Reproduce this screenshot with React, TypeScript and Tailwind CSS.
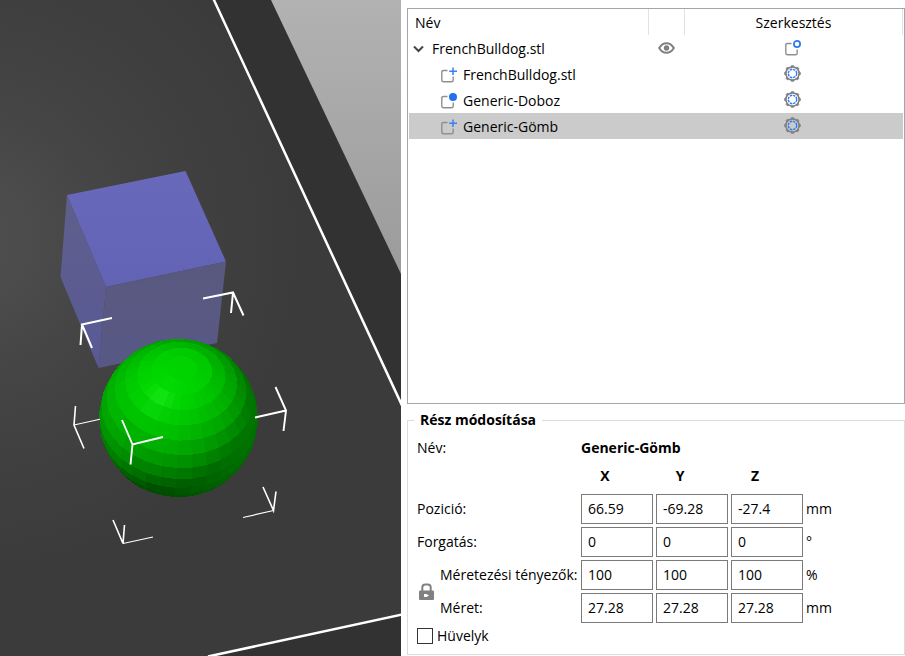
import { useState } from "react";

type Vec3 = [number, number, number];

const dot = (a: Vec3, b: Vec3) => a[0] * b[0] + a[1] * b[1] + a[2] * b[2];
const cross = (a: Vec3, b: Vec3): Vec3 => [
  a[1] * b[2] - a[2] * b[1],
  a[2] * b[0] - a[0] * b[2],
  a[0] * b[1] - a[1] * b[0],
];
const normalize = (a: Vec3): Vec3 => {
  const l = Math.sqrt(dot(a, a));
  return [a[0] / l, a[1] / l, a[2] / l];
};

const STEP = 11.25;
const POLE = normalize([0.045, 0.635, 0.765]);
const SIDE = normalize(cross(POLE, [0.35, -0.6, 0.7]));
const BACK = cross(POLE, SIDE);
const TOP_LIGHT: Vec3 = [-0.4575, 0.4575, 0.7625];
const FRONT_LIGHT: Vec3 = [0.6985, 0.1397, 0.6985];
const HALF = normalize([TOP_LIGHT[0], TOP_LIGHT[1], TOP_LIGHT[2] + 1]);

function onSphere(theta: number, phi: number): Vec3 {
  const t = (theta * Math.PI) / 180;
  const p = (phi * Math.PI) / 180;
  const s = Math.sin(t);
  return [0, 1, 2].map(
    (i) => POLE[i] * Math.cos(t) + s * (SIDE[i] * Math.cos(p) + BACK[i] * Math.sin(p)),
  ) as Vec3;
}

// Flat-shaded facets of the sphere, front side only.
function sphereFacets(cx: number, cy: number, r: number) {
  const out: { points: string; fill: string }[] = [];
  for (let t = 0; t < 180; t += STEP) {
    for (let p = 0; p < 360; p += STEP) {
      const n = onSphere(t + STEP / 2, p + STEP / 2);
      if (n[2] < -0.05) continue;
      const diffuse =
        0.3 + 0.48 * Math.max(dot(n, TOP_LIGHT), 0) + 0.18 * Math.max(dot(n, FRONT_LIGHT), 0);
      const capDiffuse =
        0.3 + 0.48 * Math.max(dot(POLE, TOP_LIGHT), 0) + 0.18 * Math.max(dot(POLE, FRONT_LIGHT), 0);
      const mix = t < STEP ? 0.8 : t < STEP * 2 ? 0.4 : 0;
      const spec = 0.075 * Math.pow(Math.max(dot(n, HALF), 0), 70);
      const g = Math.round(255 * Math.min(1, diffuse * (1 - mix) + capDiffuse * mix + spec * 0.6));
      const rb = Math.round(255 * spec);
      const corners = [
        onSphere(t, p),
        onSphere(t + STEP, p),
        onSphere(t + STEP, p + STEP),
        onSphere(t, p + STEP),
      ];
      out.push({
        points: corners.map((c) => `${(cx + c[0] * r).toFixed(2)},${(cy - c[1] * r).toFixed(2)}`).join(" "),
        fill: `rgb(${rb},${g},${rb})`,
      });
    }
  }
  return out;
}

const FACETS = sphereFacets(178.5, 418, 79.5);

function Viewport() {
  return (
    <svg
      className="block h-full w-full"
      viewBox="0 0 401 656"
      preserveAspectRatio="xMinYMin slice"
      role="img"
      aria-label="3D"
    >
      <defs>
        <linearGradient id="sky" x1="0" y1="0" x2="0" y2="1">
          <stop offset="0" stopColor="#b2b2b2" />
          <stop offset="1" stopColor="#9b9b9b" />
        </linearGradient>
        <radialGradient id="bed" gradientUnits="userSpaceOnUse" cx="-30" cy="240" r="330">
          <stop offset="0" stopColor="#505050" />
          <stop offset="0.5" stopColor="#434343" />
          <stop offset="1" stopColor="#3b3b3b" />
        </radialGradient>
        <linearGradient id="boxTop" x1="0" y1="0" x2="0" y2="1">
          <stop offset="0" stopColor="#6969bc" />
          <stop offset="1" stopColor="#6363b6" />
        </linearGradient>
        <linearGradient id="boxLeft" x1="0" y1="0" x2="0" y2="1">
          <stop offset="0" stopColor="#5f5f8d" />
          <stop offset="1" stopColor="#595996" />
        </linearGradient>
        <linearGradient id="boxFront" x1="0" y1="0" x2="0" y2="1">
          <stop offset="0" stopColor="#59597f" />
          <stop offset="1" stopColor="#585886" />
        </linearGradient>
      </defs>
      <rect width="401" height="656" fill="#323232" />
      <path d="M271 0H401V274Z" fill="url(#sky)" />
      <path d="M0 0H213.500L401 404V615L210 656H0Z" fill="url(#bed)" />
      <path d="M213.500 -1L402 405.500M402 614.500L208 656.500" stroke="#fff" strokeWidth="2.500" fill="none" />
      <path d="M67 195L185.500 171L226 261.500L106 287Z" fill="url(#boxTop)" />
      <path d="M67 195L106 287L98.500 368L60.500 277Z" fill="url(#boxLeft)" />
      <path d="M106 287L226 261.500L217 343L98.500 368Z" fill="url(#boxFront)" />
      <g stroke="#fff" fill="none">
        <path d="M203 298.500L233 292.500L243.500 315.500M233 292.500L231 313M112 318L82 324.500L92 348M82 324.500L80.500 345" strokeWidth="2" />
        <path d="M75.500 406L74 425L84 448.500M263 487L273.500 510.500L276 491.500M113 520L123 543.500L124.500 525" strokeWidth="1.600" />
        <path d="M74 425L101 419M273.500 510.500L243 517.500M123 543.500L153 537" strokeWidth="1.200" />
      </g>
      <g shapeRendering="crispEdges">
        {FACETS.map((f, i) => (
          <polygon key={i} points={f.points} fill={f.fill} />
        ))}
      </g>
      <g stroke="#fff" fill="none" strokeWidth="1.900">
        <path d="M122 420L132.500 444.500L163 437M132.500 444.500L130.500 464.500" />
        <path d="M275.500 387L286 410.500L283.500 431M286 410.500L255 417.500" />
      </g>
    </svg>
  );
}

type PartKind = "plus" | "dot" | "ring";

function PartIcon({ kind }: { kind: PartKind }) {
  return (
    <svg className="block size-4 shrink-0" viewBox="0 0 16 16" fill="none" aria-hidden="true">
      <path
        d="M6.500 3.500H2.500Q0.800 3.500 0.800 5V13Q0.800 14.800 2.500 14.800H10.500Q12.200 14.800 12.200 13V9.500"
        stroke="#8f8f8f"
        strokeWidth="1.400"
      />
      {kind === "plus" && <path d="M12 0.500V8M8.200 4.200H16" stroke="#3c80f0" strokeWidth="1.500" />}
      {kind === "dot" && <circle cx="12" cy="4" r="4" fill="#2172eb" />}
      {kind === "ring" && <circle cx="12" cy="4" r="3.100" stroke="#2b7bf3" strokeWidth="1.800" />}
    </svg>
  );
}

function GearIcon() {
  return (
    <svg className="block size-[17px]" viewBox="0 0 17 17" fill="none" aria-hidden="true">
      <circle cx="8.500" cy="8.500" r="6.600" stroke="#808080" strokeWidth="1.500" />
      {[0, 45, 90, 135, 180, 225, 270, 315].map((a) => (
        <path key={a} d="M6.700 2L7.500 0.400H9.500L10.300 2Z" fill="#808080" stroke="#808080" strokeWidth="0.500" transform={`rotate(${a} 8.500 8.500)`} />
      ))}
      <circle cx="8.500" cy="8.500" r="4.200" stroke="#2b7bf3" strokeWidth="1.400" strokeDasharray="2.500 0.799" />
    </svg>
  );
}

function EyeIcon() {
  return (
    <svg className="block h-4 w-[17px]" viewBox="0 0 17 16" aria-hidden="true">
      <path d="M1.200 8Q4 3.200 8.500 3.200T15.800 8Q13 12.800 8.500 12.800T1.200 8Z" fill="none" stroke="#808080" strokeWidth="2" />
      <circle cx="8.500" cy="8" r="2.700" fill="#808080" />
    </svg>
  );
}

function LockIcon() {
  return (
    <svg className="block h-[18px] w-4" viewBox="0 0 16 18" aria-hidden="true">
      <path d="M3.300 8V4.500Q3.300 1.500 6.300 1.500H8.700Q11.700 1.500 11.700 4.500V8" fill="none" stroke="#808080" strokeWidth="2" />
      <rect x="0" y="7.500" width="15" height="9.500" rx="1" fill="#808080" />
      <path d="M5 11H7.500L10 12.500L7.500 14H5Z" fill="#fff" />
    </svg>
  );
}

const PARTS: { name: string; kind: PartKind }[] = [
  { name: "FrenchBulldog.stl", kind: "plus" },
  { name: "Generic-Doboz", kind: "dot" },
  { name: "Generic-Gömb", kind: "plus" },
];

function ObjectList() {
  const [selected, setSelected] = useState(2);
  return (
    <div className="min-h-0 flex-1 overflow-hidden border border-[#a5a5ab] px-px">
      <table className="w-full table-fixed border-collapse">
        <colgroup>
          <col />
          <col className="w-9" />
          <col className="w-[218px]" />
        </colgroup>
        <thead>
          <tr className="h-[26px]">
            <th className="border-r border-[#e2e2e2] p-0 pt-0.5 pl-1.5 text-left font-normal">Név</th>
            <th className="border-r border-[#e2e2e2] p-0" />
            <th className="border-r border-[#e2e2e2] p-0 pt-0.5 text-center font-normal">Szerkesztés</th>
          </tr>
        </thead>
        <tbody>
          <tr className="h-[26px]">
            <td className="p-0 pt-0.5">
              <div className="flex items-center gap-2 pl-1">
                <button type="button" aria-label="FrenchBulldog.stl" aria-expanded="true">
                  <svg className="block h-3 w-[11px]" viewBox="0 0 11 12" aria-hidden="true">
                    <path d="M1 3.500L5.500 8L10 3.500" fill="none" stroke="#444" strokeWidth="2" />
                  </svg>
                </button>
                FrenchBulldog.stl
              </div>
            </td>
            <td className="p-0">
              <button type="button" aria-label="Láthatóság" className="mx-auto block"><EyeIcon /></button>
            </td>
            <td className="p-0 pr-0.5">
              <button type="button" aria-label="Szerkesztés" className="mx-auto block"><PartIcon kind="ring" /></button>
            </td>
          </tr>
          {PARTS.map((part, i) => (
            <tr
              key={i}
              onClick={() => setSelected(i)}
              className={i === selected ? "h-[26px] bg-[#cbcbcb]" : "h-[26px]"}
            >
              <td className="p-0 pt-0.5">
                <div className="flex items-center gap-1.5 pl-8">
                  <PartIcon kind={part.kind} />
                  {part.name}
                </div>
              </td>
              <td className="p-0" />
              <td className="p-0 pr-0.5 pb-px">
                <button type="button" aria-label={`Szerkesztés ${part.name}`} className="mx-auto block"><GearIcon /></button>
              </td>
            </tr>
          ))}
        </tbody>
      </table>
    </div>
  );
}

function Fields({ name, values, unit }: { name: string; values: string[]; unit: string }) {
  return (
    <>
      {values.map((v, i) => (
        <input
          key={i}
          type="text"
          aria-label={`${name} ${"XYZ"[i]}`}
          defaultValue={v}
          className="h-[30px] w-full border border-[#7a7a7a] bg-white px-1.5 pb-0.5 outline-none"
        />
      ))}
      <span>{unit}</span>
    </>
  );
}

function PartEditor() {
  return (
    <fieldset className="border border-[#dcdcdc] px-[9px] pb-2">
      <legend className="-ml-[3px] px-1.5 leading-5 font-bold">Rész módosítása</legend>
      <div className="grid grid-cols-[20px_138px_72px_72px_72px_auto] items-center gap-[3px] pt-2">
        <span className="col-span-2 leading-5">Név:</span>
        <strong className="col-span-4 leading-5">Generic-Gömb</strong>
        <span className="col-span-2 h-[30px]" />
        <strong className="pr-6 text-center">X</strong>
        <strong className="pr-6 text-center">Y</strong>
        <strong className="pr-6 text-center">Z</strong>
        <span />
        <span className="col-span-2">Pozició:</span>
        <Fields name="Pozició" values={["66.59", "-69.28", "-27.4"]} unit="mm" />
        <span className="col-span-2">Forgatás:</span>
        <Fields name="Forgatás" values={["0", "0", "0"]} unit="°" />
        <button type="button" aria-label="Arányok zárolása" className="row-span-2 flex pl-0.5">
          <LockIcon />
        </button>
        <span className="whitespace-nowrap">Méretezési tényezők:</span>
        <Fields name="Méretezési tényezők" values={["100", "100", "100"]} unit="%" />
        <span>Méret:</span>
        <Fields name="Méret" values={["27.28", "27.28", "27.28"]} unit="mm" />
      </div>
      <label className="mt-[3px] flex w-fit items-center gap-1">
        <input type="checkbox" className="size-4 appearance-none border border-[#333] bg-white checked:bg-[#2172eb]" />
        Hüvelyk
      </label>
    </fieldset>
  );
}

export default function App() {
  return (
    <main className="flex h-screen overflow-hidden bg-white font-['Open_Sans','Noto_Sans',sans-serif] text-sm text-black">
      <section className="min-w-0 flex-1">
        <Viewport />
      </section>
      <section className="flex w-[504px] shrink-0 flex-col gap-1.5 pt-2 pb-px pl-1.5">
        <ObjectList />
        <PartEditor />
      </section>
    </main>
  );
}
